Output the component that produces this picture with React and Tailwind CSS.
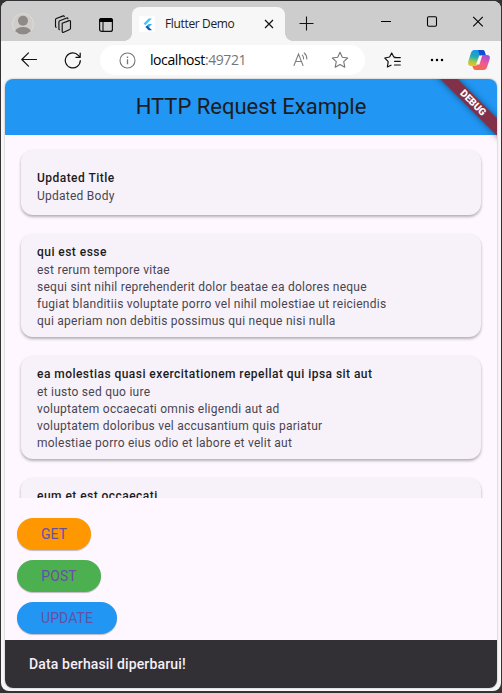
const posts = [
  { title: 'Updated Title', body: ['Updated Body'], box: 'h-[65px] pt-[20px]' },
  {
    title: 'qui est esse',
    body: [
      'est rerum tempore vitae',
      'sequi sint nihil reprehenderit dolor beatae ea dolores neque',
      'fugiat blanditiis voluptate porro vel nihil molestiae ut reiciendis',
      'qui aperiam non debitis possimus qui neque nisi nulla',
    ],
    box: 'h-[103px] pt-[10px]',
  },
  {
    title: 'ea molestias quasi exercitationem repellat qui ipsa sit aut',
    body: [
      'et iusto sed quo iure',
      'voluptatem occaecati omnis eligendi aut ad',
      'voluptatem doloribus vel accusantium quis pariatur',
      'molestiae porro eius odio et labore et velit aut',
    ],
    box: 'h-[103px] pt-[10px]',
  },
  { title: 'eum et est occaecati', body: [], box: 'h-[103px] pt-[10px]' },
];

function TabStrip() {
  return (
    <div className="flex h-10 shrink-0 bg-[#cdcdcd]">
      <div className="flex w-[131px] items-start pl-[11px] pt-[12px]">
        <svg width="22" height="22" viewBox="0 0 22 22">
          <defs>
            <clipPath id="avatar"><circle cx="11" cy="11" r="10.5" /></clipPath>
          </defs>
          <circle cx="11" cy="11" r="10.5" fill="#d0cecb" stroke="#dedbd6" />
          <g clipPath="url(#avatar)" fill="#8e8a87">
            <circle cx="11" cy="7.800" r="5" />
            <ellipse cx="11" cy="19" rx="8" ry="5" />
          </g>
        </svg>
        <svg className="ml-[20px] mt-[2px]" width="18" height="19" viewBox="0 0 18 19" fill="none" stroke="#111" strokeWidth="1.15" strokeLinejoin="round" strokeLinecap="round">
          <path d="M8.200 8.200 15.200 5.600q1.300-.4 1.300.9v6.700q0 .8-.8 1.200l-6 2.800q-1.500.5-1.500-1z" />
          <path d="M5.400 14.700q-.5-.3-.5-1V7q0-.9.8-1.200L12.800 3q1-.3 1.100.8" />
          <path d="M2.100 12.300q-.6-.3-.6-1V4.700q0-.9.8-1.200L9.200.9q1-.2 1.100.7" />
        </svg>
        <svg className="ml-[26px] mt-[4px]" width="16" height="16" viewBox="0 0 16 16">
          <rect x="1.600" y="1.600" width="12.800" height="12.800" rx="2" fill="none" stroke="#111" strokeWidth="1.200" />
          <path d="M1 5V3.500Q1 1 3.500 1h9Q15 1 15 3.500V5Z" fill="#000" />
          <path d="M5 5v9.500" stroke="#111" strokeWidth="1.100" />
        </svg>
      </div>
      <div className="relative mt-[6px] flex h-[34px] w-[153px] items-center rounded-t-[8px] bg-[#f7f7f7] pl-[7px]">
        <span className="absolute bottom-0 -left-[8px] size-2 bg-[radial-gradient(circle_at_0_0,#cdcdcd_7.6px,#f7f7f7_8.2px)]" />
        <span className="absolute bottom-0 -right-[8px] size-2 bg-[radial-gradient(circle_at_100%_0,#cdcdcd_7.6px,#f7f7f7_8.2px)]" />
        <span className="flex size-4 items-center justify-center bg-white">
          <svg width="11" height="13" viewBox="0 0 11 13">
            <path d="M6.600.5H10L3.300 7.200 1.600 5.500Z" fill="#47c5fb" />
            <path d="M6.600 6.100H10L7.100 9 5 9.300 3.500 9.100Z" fill="#35aef0" />
            <path d="M3.500 9.100 5.200 7.500 10 12.300H6.700Z" fill="#1556a8" />
          </svg>
        </span>
        <span className="ml-[10px] w-[99px] whitespace-nowrap font-['Open_Sans',sans-serif] text-[12px] leading-4 tracking-[-0.35px] text-[#222]">Flutter Demo</span>
        <svg width="10" height="10" viewBox="0 0 10 10" stroke="#111" strokeWidth="1.200">
          <path d="m1 1 8 8M9 1 1 9" />
        </svg>
      </div>
      <svg className="ml-[14px] mt-[15px]" width="15" height="15" viewBox="0 0 15 15" stroke="#111" strokeWidth="1.100">
        <path d="M.5 7.500h14M7.500.5v14" />
      </svg>
      <div className="ml-auto flex pr-[17px] pt-[15px] text-black">
        <svg width="103" height="12" viewBox="0 0 103 12" fill="none" stroke="currentColor" strokeWidth="1.100">
          <path d="M0 5.500h10" />
          <rect x="46.500" y=".8" width="9" height="9.400" rx="1.200" />
          <path d="m92.200.8 9.600 9.600M101.800.8l-9.600 9.600" />
        </svg>
      </div>
    </div>
  );
}

function Copilot() {
  return (
    <svg width="24" height="22" viewBox="0 0 24 22">
      <defs>
        <linearGradient id="cpA" x1=".4" y1="0" x2=".2" y2="1">
          <stop offset="0" stopColor="#1594f0" />
          <stop offset=".4" stopColor="#22a8b8" />
          <stop offset=".7" stopColor="#9bc84a" />
          <stop offset="1" stopColor="#f4c321" />
        </linearGradient>
        <linearGradient id="cpB" x1=".8" y1="0" x2=".3" y2="1">
          <stop offset="0" stopColor="#a34be0" />
          <stop offset=".5" stopColor="#ee5a94" />
          <stop offset="1" stopColor="#fb6b3c" />
        </linearGradient>
      </defs>
      <path d="M7.500 1h8.200q1.600 0 2.100 1.700l.9 3.200h-3q-2 0-2.600 2l-2 6.500Q10.300 17 8 17H4.300Q.2 17 1.300 12.500L3.900 4Q4.900 1 7.500 1Z" fill="url(#cpA)" />
      <path d="M11.200 1h4.500q1.600 0 2.100 1.700l.9 3.200h-3q-2 0-2.600 2Z" fill="#174bd0" />
      <path d="M16.500 21H8.300q-1.600 0-2.100-1.700L5.300 17H8q2.200 0 3-2.600l2-6.500q.7-2 2.700-2h4Q23.800 5.900 22.700 10l-2.600 8q-1 3-3.600 3Z" fill="url(#cpB)" />
      <path d="M12.300 6.500h2.900l-2.800 9H9Z" fill="#f7f7f7" />
    </svg>
  );
}

function Toolbar() {
  return (
    <div className="flex h-[38px] shrink-0 items-start bg-[#f7f7f7] pt-[4px]">
      <svg className="ml-[20px] mt-[7px]" width="17" height="16" viewBox="0 0 17 16" fill="none" stroke="#111" strokeWidth="1.150" strokeLinecap="round" strokeLinejoin="round">
        <path d="M15.500 7.500H.8M7.500.8.8 7.500l6.700 6.700" />
      </svg>
      <svg className="ml-[26px] mt-[7px]" width="18" height="17" viewBox="0 0 18 17" fill="none" stroke="#111" strokeWidth="1.200" strokeLinecap="round" strokeLinejoin="round">
        <path d="M16.300 8.500A7.500 7.500 0 1 1 14.300 3.300L16 5.100M16.200 1v4.300h-4.300" />
      </svg>
      <div className="ml-[18px] flex h-[30px] w-[265px] items-center rounded-full bg-white pl-[18px]">
        <svg className="ml-px" width="17" height="17" viewBox="0 0 17 17" fill="none" stroke="#767676" strokeWidth="1.100">
          <circle cx="8.500" cy="8.500" r="7.500" />
          <path d="M8.500 7.300v5M8.500 4.400v1.500" strokeWidth="1.300" />
        </svg>
        <span className="ml-[14px] w-[143px] whitespace-nowrap font-['Open_Sans',sans-serif] text-[14px] leading-5 tracking-[-0.42px] text-black">
          localhost<span className="text-[#767676]">:49721</span>
        </span>
        <svg className="-mt-px" width="17" height="15" viewBox="0 0 17 15" fill="none" stroke="#808080" strokeWidth="1.100" strokeLinecap="round">
          <path d="M1 13.500 5.500 2l4.500 11.500M2.600 9.500h5.800M9.300 3.200q1.500 1.500 1.300 3.700M11.200 1q2.800 2.200 2.600 6" />
        </svg>
        <svg className="ml-[21px]" width="18" height="18" viewBox="0 0 18 18" fill="none" stroke="#767676" strokeWidth="1.100" strokeLinejoin="round">
          <path d="m9 1.300 2.300 5 5.400.7-4 3.700 1.100 5.500L9 13.500l-4.800 2.700 1.100-5.500-4-3.700 5.400-.7Z" />
        </svg>
      </div>
      <svg className="ml-[19px] mt-[7px]" width="17" height="17" viewBox="0 0 17 17" fill="none" stroke="#111" strokeWidth="1.200" strokeLinejoin="round" strokeLinecap="round">
        <path d="M11 5.200 9.800 5 7.700 1 5.600 5 .8 6 4.200 9.600l-.8 5.400L7 13.200M10.500 5.600h5.800M10.500 9.300h5.800M10.500 13h5.800" />
      </svg>
      <svg className="ml-[29px] mt-[13px]" width="14" height="4" viewBox="0 0 14 4">
        <circle cx="2" cy="2" r="1.250" /><circle cx="7" cy="2" r="1.250" /><circle cx="12" cy="2" r="1.250" />
      </svg>
      <span className="ml-[23px] mt-[4px]"><Copilot /></span>
    </div>
  );
}

function Card({ post }) {
  return (
    <div className={`${post.box} shrink-0 rounded-[12px] bg-[#f7f2fa] pl-4 shadow-[0_2px_3px_rgba(0,0,0,0.24),0_1px_3px_rgba(0,0,0,0.1)]`}>
      <div className="whitespace-nowrap text-[12px] font-medium leading-[17px] tracking-[0.46px] text-[#1d1b20]">{post.title}</div>
      <div className="mt-px whitespace-nowrap text-[12px] leading-[17px] tracking-[0.25px] text-[#49454f]">
        {post.body.map((line) => <div key={line}>{line}</div>)}
      </div>
    </div>
  );
}

function ActionButton({ className, children }) {
  return (
    <button className={`${className} flex h-8 items-center justify-center rounded-full text-[14px] tracking-[0.05px] text-[#6750a4] shadow-[0_1px_1px_rgba(0,0,0,0.25)]`}>
      {children}
    </button>
  );
}

export default function App() {
  return (
    <div className="h-[693px] w-[502px] overflow-hidden bg-[#343235] px-px pb-[2px] pt-px font-[Roboto,sans-serif]">
      <div className="flex h-[690px] flex-col overflow-hidden rounded-[8px] bg-[#f7f7f7]">
        <TabStrip />
        <Toolbar />
        <main className="relative ml-[4px] flex h-[609px] w-[492px] flex-col overflow-hidden rounded-[8px] bg-[#fef7ff] shadow-[0_0_2px_rgba(0,0,0,0.35)]">
          <header className="flex h-14 shrink-0 items-center justify-center bg-[#2196f3] pb-[2px] text-[22px] text-[#1d1b20]">
            HTTP Request Example
          </header>
          <div className="absolute left-[418px] top-[18px] flex h-3 w-[100px] rotate-45 items-center justify-center bg-[#823047] text-[10px] font-black leading-3 text-white shadow-[0_0_6px_rgba(0,0,0,0.5)]">
            DEBUG
          </div>
          <section className="mx-2 flex h-[363px] shrink-0 flex-col gap-[19px] overflow-hidden px-2 pt-[15px]">
            {posts.map((post) => <Card key={post.title} post={post} />)}
          </section>
          <div className="flex flex-col items-start gap-[10px] pl-3 pt-5">
            <ActionButton className="w-[74px] bg-[#ff9800]">GET</ActionButton>
            <ActionButton className="w-[84px] bg-[#4caf50]">POST</ActionButton>
            <ActionButton className="w-[100px] bg-[#2196f3]">UPDATE</ActionButton>
          </div>
          <footer className="mt-auto flex h-12 shrink-0 items-center bg-[#322f35] pl-6 text-[14px] font-medium tracking-[0.15px] text-[#f5eff7]">
            Data berhasil diperbarui!
          </footer>
        </main>
      </div>
    </div>
  );
}
